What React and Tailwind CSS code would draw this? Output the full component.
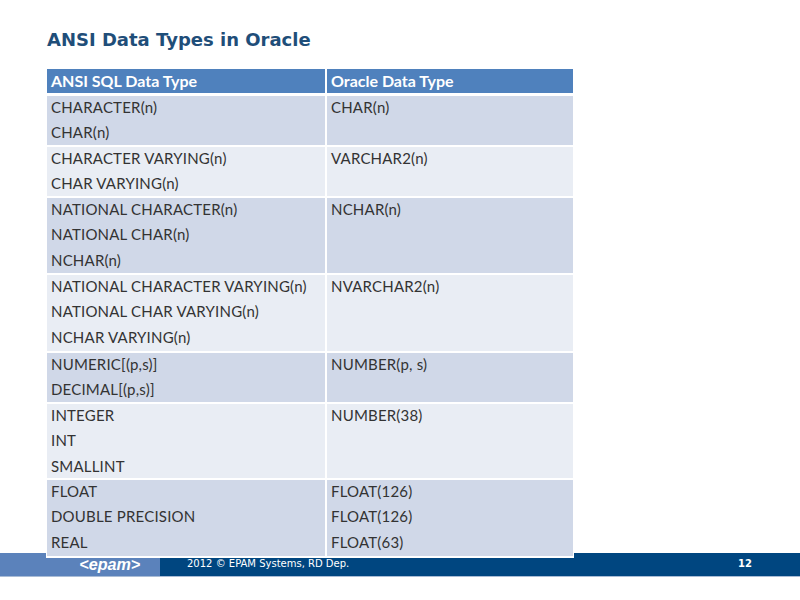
const rows = [
  { left: ["CHARACTER(n)", "CHAR(n)"], right: ["CHAR(n)"], h: "h-[49px]", bg: "bg-[#d0d8e8]" },
  { left: ["CHARACTER VARYING(n)", "CHAR VARYING(n)"], right: ["VARCHAR2(n)"], h: "h-[49px]", bg: "bg-[#e9edf4]" },
  { left: ["NATIONAL CHARACTER(n)", "NATIONAL CHAR(n)", "NCHAR(n)"], right: ["NCHAR(n)"], h: "h-[75px]", bg: "bg-[#d0d8e8]" },
  { left: ["NATIONAL CHARACTER VARYING(n)", "NATIONAL CHAR VARYING(n)", "NCHAR VARYING(n)"], right: ["NVARCHAR2(n)"], h: "h-[76px]", bg: "bg-[#e9edf4]" },
  { left: ["NUMERIC[(p,s)]", "DECIMAL[(p,s)]"], right: ["NUMBER(p, s)"], h: "h-[49px]", bg: "bg-[#d0d8e8]" },
  { left: ["INTEGER", "INT", "SMALLINT"], right: ["NUMBER(38)"], h: "h-[74px]", bg: "bg-[#e9edf4]" },
  { left: ["FLOAT", "DOUBLE PRECISION", "REAL"], right: ["FLOAT(126)", "FLOAT(126)", "FLOAT(63)"], h: "h-[76px]", bg: "bg-[#d0d8e8]" },
];

const Cell = ({ lines, className }) => (
  <div className={`px-[4px] ${className}`}>
    {lines.map((line) => (
      <div key={line} className="h-[25.3px] leading-[23px] whitespace-nowrap">{line}</div>
    ))}
  </div>
);

const App = () => {
  return (
    <div className="relative w-[800px] h-[600px] bg-white overflow-hidden font-['Lato',sans-serif]">
      <h1 className="pl-[47px] pt-[28px] h-[69px] text-[18px] leading-[23px] font-bold text-[#1f4e79] font-['DejaVu_Sans',sans-serif]">
        ANSI Data Types in Oracle
      </h1>

      <div className="relative z-10 ml-[46px] w-[528px] flex flex-col gap-[2px] border-x border-white text-[15px] tracking-[0.2px] text-[#333333] bg-white pb-[2px]">
        <div className="flex gap-[2px] h-[24px] mb-[1px] text-white font-bold text-[16px] tracking-normal">
          <div className="w-[278px] bg-[#4f81bd] px-[4px] leading-[24px]">ANSI SQL Data Type</div>
          <div className="flex-1 bg-[#4f81bd] px-[4px] leading-[24px]">Oracle Data Type</div>
        </div>
        {rows.map((row) => (
          <div key={row.left[0]} className={`flex gap-[2px] ${row.h}`}>
            <Cell lines={row.left} className={`w-[278px] ${row.bg}`} />
            <Cell lines={row.right} className={`flex-1 ${row.bg}`} />
          </div>
        ))}
      </div>

      <div className="absolute left-0 top-[553px] w-[800px] h-[24px] flex border-b border-[#a9bcd6] text-white">
        <div className="w-[160px] bg-[#5b82bb] flex justify-end items-center pr-[20px]">
          <span className="text-[17px] font-bold italic leading-none scale-x-[0.95] origin-right font-['Liberation_Sans',sans-serif]">&lt;epam&gt;</span>
        </div>
        <div className="flex-1 bg-[#004680] flex items-start pt-[4px] pl-[27px] text-[10px] leading-[13px] font-['DejaVu_Sans',sans-serif]">
          <span>2012 © EPAM Systems, RD Dep.</span>
          <span className="ml-auto mr-[48px] font-bold">12</span>
        </div>
      </div>
    </div>
  );
};

export default App;
